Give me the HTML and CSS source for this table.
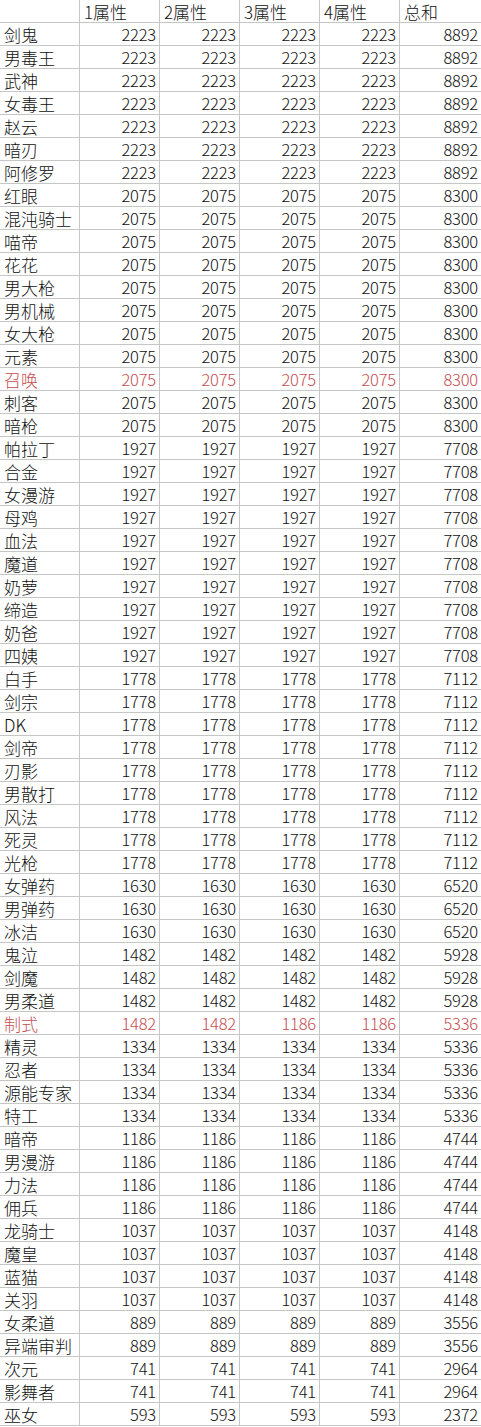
FILE: index.html
```html
<!DOCTYPE html>
<html lang="zh">
<head>
<meta charset="utf-8">
<title>属性表</title>
<link rel="stylesheet" href="styles.css">
</head>
<body>
<table class="sheet">
<colgroup><col class="c"><col class="c"><col class="c"><col class="c"><col class="c"><col class="c-last"></colgroup>
<thead>
<tr><th></th><th>1属性</th><th>2属性</th><th>3属性</th><th>4属性</th><th>总和</th></tr>
</thead>
<tbody>
<tr><td>剑鬼</td><td>2223</td><td>2223</td><td>2223</td><td>2223</td><td>8892</td></tr>
<tr><td>男毒王</td><td>2223</td><td>2223</td><td>2223</td><td>2223</td><td>8892</td></tr>
<tr><td>武神</td><td>2223</td><td>2223</td><td>2223</td><td>2223</td><td>8892</td></tr>
<tr><td>女毒王</td><td>2223</td><td>2223</td><td>2223</td><td>2223</td><td>8892</td></tr>
<tr><td>赵云</td><td>2223</td><td>2223</td><td>2223</td><td>2223</td><td>8892</td></tr>
<tr><td>暗刃</td><td>2223</td><td>2223</td><td>2223</td><td>2223</td><td>8892</td></tr>
<tr><td>阿修罗</td><td>2223</td><td>2223</td><td>2223</td><td>2223</td><td>8892</td></tr>
<tr><td>红眼</td><td>2075</td><td>2075</td><td>2075</td><td>2075</td><td>8300</td></tr>
<tr><td>混沌骑士</td><td>2075</td><td>2075</td><td>2075</td><td>2075</td><td>8300</td></tr>
<tr><td>喵帝</td><td>2075</td><td>2075</td><td>2075</td><td>2075</td><td>8300</td></tr>
<tr><td>花花</td><td>2075</td><td>2075</td><td>2075</td><td>2075</td><td>8300</td></tr>
<tr><td>男大枪</td><td>2075</td><td>2075</td><td>2075</td><td>2075</td><td>8300</td></tr>
<tr><td>男机械</td><td>2075</td><td>2075</td><td>2075</td><td>2075</td><td>8300</td></tr>
<tr><td>女大枪</td><td>2075</td><td>2075</td><td>2075</td><td>2075</td><td>8300</td></tr>
<tr><td>元素</td><td>2075</td><td>2075</td><td>2075</td><td>2075</td><td>8300</td></tr>
<tr class="hl"><td>召唤</td><td>2075</td><td>2075</td><td>2075</td><td>2075</td><td>8300</td></tr>
<tr><td>刺客</td><td>2075</td><td>2075</td><td>2075</td><td>2075</td><td>8300</td></tr>
<tr><td>暗枪</td><td>2075</td><td>2075</td><td>2075</td><td>2075</td><td>8300</td></tr>
<tr><td>帕拉丁</td><td>1927</td><td>1927</td><td>1927</td><td>1927</td><td>7708</td></tr>
<tr><td>合金</td><td>1927</td><td>1927</td><td>1927</td><td>1927</td><td>7708</td></tr>
<tr><td>女漫游</td><td>1927</td><td>1927</td><td>1927</td><td>1927</td><td>7708</td></tr>
<tr><td>母鸡</td><td>1927</td><td>1927</td><td>1927</td><td>1927</td><td>7708</td></tr>
<tr><td>血法</td><td>1927</td><td>1927</td><td>1927</td><td>1927</td><td>7708</td></tr>
<tr><td>魔道</td><td>1927</td><td>1927</td><td>1927</td><td>1927</td><td>7708</td></tr>
<tr><td>奶萝</td><td>1927</td><td>1927</td><td>1927</td><td>1927</td><td>7708</td></tr>
<tr><td>缔造</td><td>1927</td><td>1927</td><td>1927</td><td>1927</td><td>7708</td></tr>
<tr><td>奶爸</td><td>1927</td><td>1927</td><td>1927</td><td>1927</td><td>7708</td></tr>
<tr><td>四姨</td><td>1927</td><td>1927</td><td>1927</td><td>1927</td><td>7708</td></tr>
<tr><td>白手</td><td>1778</td><td>1778</td><td>1778</td><td>1778</td><td>7112</td></tr>
<tr><td>剑宗</td><td>1778</td><td>1778</td><td>1778</td><td>1778</td><td>7112</td></tr>
<tr><td>DK</td><td>1778</td><td>1778</td><td>1778</td><td>1778</td><td>7112</td></tr>
<tr><td>剑帝</td><td>1778</td><td>1778</td><td>1778</td><td>1778</td><td>7112</td></tr>
<tr><td>刃影</td><td>1778</td><td>1778</td><td>1778</td><td>1778</td><td>7112</td></tr>
<tr><td>男散打</td><td>1778</td><td>1778</td><td>1778</td><td>1778</td><td>7112</td></tr>
<tr><td>风法</td><td>1778</td><td>1778</td><td>1778</td><td>1778</td><td>7112</td></tr>
<tr><td>死灵</td><td>1778</td><td>1778</td><td>1778</td><td>1778</td><td>7112</td></tr>
<tr><td>光枪</td><td>1778</td><td>1778</td><td>1778</td><td>1778</td><td>7112</td></tr>
<tr><td>女弹药</td><td>1630</td><td>1630</td><td>1630</td><td>1630</td><td>6520</td></tr>
<tr><td>男弹药</td><td>1630</td><td>1630</td><td>1630</td><td>1630</td><td>6520</td></tr>
<tr><td>冰洁</td><td>1630</td><td>1630</td><td>1630</td><td>1630</td><td>6520</td></tr>
<tr><td>鬼泣</td><td>1482</td><td>1482</td><td>1482</td><td>1482</td><td>5928</td></tr>
<tr><td>剑魔</td><td>1482</td><td>1482</td><td>1482</td><td>1482</td><td>5928</td></tr>
<tr><td>男柔道</td><td>1482</td><td>1482</td><td>1482</td><td>1482</td><td>5928</td></tr>
<tr class="hl"><td>制式</td><td>1482</td><td>1482</td><td>1186</td><td>1186</td><td>5336</td></tr>
<tr><td>精灵</td><td>1334</td><td>1334</td><td>1334</td><td>1334</td><td>5336</td></tr>
<tr><td>忍者</td><td>1334</td><td>1334</td><td>1334</td><td>1334</td><td>5336</td></tr>
<tr><td>源能专家</td><td>1334</td><td>1334</td><td>1334</td><td>1334</td><td>5336</td></tr>
<tr><td>特工</td><td>1334</td><td>1334</td><td>1334</td><td>1334</td><td>5336</td></tr>
<tr><td>暗帝</td><td>1186</td><td>1186</td><td>1186</td><td>1186</td><td>4744</td></tr>
<tr><td>男漫游</td><td>1186</td><td>1186</td><td>1186</td><td>1186</td><td>4744</td></tr>
<tr><td>力法</td><td>1186</td><td>1186</td><td>1186</td><td>1186</td><td>4744</td></tr>
<tr><td>佣兵</td><td>1186</td><td>1186</td><td>1186</td><td>1186</td><td>4744</td></tr>
<tr><td>龙骑士</td><td>1037</td><td>1037</td><td>1037</td><td>1037</td><td>4148</td></tr>
<tr><td>魔皇</td><td>1037</td><td>1037</td><td>1037</td><td>1037</td><td>4148</td></tr>
<tr><td>蓝猫</td><td>1037</td><td>1037</td><td>1037</td><td>1037</td><td>4148</td></tr>
<tr><td>关羽</td><td>1037</td><td>1037</td><td>1037</td><td>1037</td><td>4148</td></tr>
<tr><td>女柔道</td><td>889</td><td>889</td><td>889</td><td>889</td><td>3556</td></tr>
<tr><td>异端审判</td><td>889</td><td>889</td><td>889</td><td>889</td><td>3556</td></tr>
<tr><td>次元</td><td>741</td><td>741</td><td>741</td><td>741</td><td>2964</td></tr>
<tr><td>影舞者</td><td>741</td><td>741</td><td>741</td><td>741</td><td>2964</td></tr>
<tr><td>巫女</td><td>593</td><td>593</td><td>593</td><td>593</td><td>2372</td></tr>
</tbody>
</table>
</body>
</html>
```

FILE: styles.css
```css
html, body {
  margin: 0;
  padding: 0;
  background: #ffffff;
}

.sheet {
  border-collapse: separate;
  border-spacing: 0;
  table-layout: fixed;
  width: 481px;
  font-family: "Noto Sans CJK SC", "Noto Sans", sans-serif;
  font-weight: 300;
  color: #0f0f0f;
}

.sheet .c { width: 80px; }
.sheet .c-last { width: 81px; }

.sheet th,
.sheet td {
  box-sizing: border-box;
  height: 23px;
  padding: 1px 3px 0 4px;
  border-right: 1px solid #c6c6c6;
  border-bottom: 1px solid #c6c6c6;
  white-space: nowrap;
  line-height: 21px;
  vertical-align: middle;
}

.sheet th:last-child,
.sheet td:last-child {
  border-right: none;
}

.sheet th {
  font-weight: 300;
  text-align: left;
  font-size: 17px;
}

.sheet td {
  text-align: right;
  font-size: 16.5px;
  letter-spacing: -0.2px;
}

.sheet td:first-child {
  text-align: left;
  font-size: 17px;
  letter-spacing: 0;
}

.sheet tr.hl td {
  color: #c44e52;
}
```
